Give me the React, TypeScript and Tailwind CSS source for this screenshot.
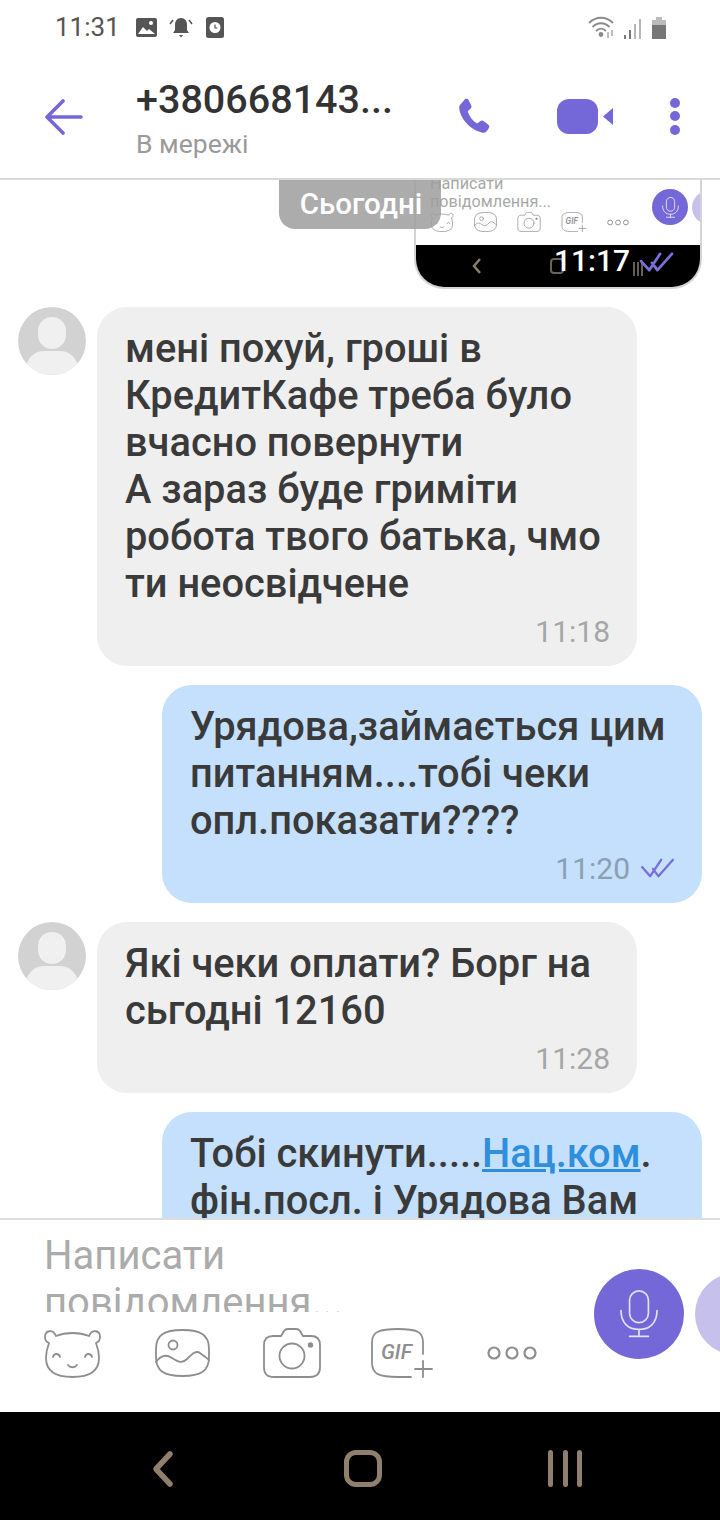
const roboto = "font-['Roboto',sans-serif]";

type IconProps = { w: number; h: number; className?: string };

function Bear({ w, h, className }: IconProps) {
    return (
        <svg width={w} height={h} viewBox="0 0 57 50" fill="none" stroke="#8e8e8e" strokeWidth="1.8" strokeLinecap="round" className={className}>
            <path d="M12 8C9 1 1 2 1 9c0 3 1.500 5 4 6-1.500 4-3 9-3 15 0 13 9 19 26.500 19S55 43 55 30c0-6-1.500-11-3-15 2.500-1 4-3 4-6 0-7-8-8-11-1-5-2-11-3-16.500-3S17 6 12 8z" />
            <path d="M9 29c1-4 6-4 7 0M41 29c1-4 6-4 7 0M24 37c2 3 7 3 9 0" />
        </svg>
    );
}

function Gallery({ w, h, className }: IconProps) {
    return (
        <svg width={w} height={h} viewBox="0 0 55 48" fill="none" stroke="#8e8e8e" strokeWidth="1.8" strokeLinecap="round" className={className}>
            <path d="M1 20C1 6 9 1 27.500 1S54 6 54 20v8c0 14-8 19-26.500 19S1 42 1 28z" />
            <circle cx="18" cy="16" r="4.500" />
            <path d="M1 33c5-7 10-8 16-4s10 6 15 1 9-9 13-6 7 5 9 7" />
        </svg>
    );
}

function Camera({ w, h, className }: IconProps) {
    return (
        <svg width={w} height={h} viewBox="0 0 58 50" fill="none" stroke="#8e8e8e" strokeWidth="1.8" strokeLinecap="round" className={className}>
            <path d="M1 17c0-6 3-9 9-9h8l3-5c1-1.500 2-2 4-2h8c2 0 3 .5 4 2l3 5h8c6 0 9 3 9 9v22c0 7-3 10-10 10H11C4 49 1 46 1 39z" />
            <circle cx="29" cy="28" r="12.500" />
            <circle cx="47.500" cy="17" r="1.800" fill="#8e8e8e" />
        </svg>
    );
}

function GifPlus({ w, h, className }: IconProps) {
    return (
        <svg width={w} height={h} viewBox="0 0 62 50" fill="none" stroke="#8e8e8e" strokeWidth="1.8" strokeLinecap="round" className={className}>
            <path d="M52 26V14C52 4 46 1 27 1S1 4 1 14v21c0 11 7 14 26 14h13" />
            <path d="M52 33v16M44 41h17" />
            <text x="10" y="31" fill="#8e8e8e" stroke="none" fontFamily="Roboto, sans-serif" fontWeight="500" fontStyle="italic" fontSize="21">GIF</text>
        </svg>
    );
}

function Dots({ w, h, className }: IconProps) {
    return (
        <svg width={w} height={h} viewBox="0 0 50 16" fill="none" stroke="#8e8e8e" strokeWidth="2.200" className={className}>
            <circle cx="7" cy="8" r="5.500" />
            <circle cx="25" cy="8" r="5.500" />
            <circle cx="43" cy="8" r="5.500" />
        </svg>
    );
}

function Mic({ size, strokeWidth = 2 }: { size: number; strokeWidth?: number }) {
    return (
        <svg width={size} height={size} viewBox="0 0 48 56" fill="none" stroke="#e4e0f8" strokeWidth={strokeWidth} strokeLinecap="round">
            <rect x="13" y="1" width="22" height="37" rx="11" />
            <path d="M3 24c0 15 9 22 21 22s21-7 21-22M24 46v8M13 54h22" />
        </svg>
    );
}

function Checks({ w, h, stroke }: { w: number; h: number; stroke: number }) {
    return (
        <svg width={w} height={h} viewBox="0 0 36 22" fill="none" stroke="#7a6fd8" strokeWidth={stroke} strokeLinecap="round" strokeLinejoin="round">
            <path d="M1 10l9 10L22 2M13 12l6 8L35 2" />
        </svg>
    );
}

function Message({ lines, time, out, checks }: { lines: React.ReactNode[]; time: string; out?: boolean; checks?: boolean }) {
    return (
        <div className={`w-[540px] rounded-[30px] pl-[28px] pr-[27px] pt-[18px] pb-[17px] ${out ? "bg-[#c4e0fc]" : "bg-[#efefef]"}`}>
            <div className="text-[39.800px] leading-[47px] font-medium text-[#3a3a3a] whitespace-nowrap">
                {lines.map((l, i) => <div key={i}>{l}</div>)}
            </div>
            <div className={`mt-[6px] flex h-[36px] items-center justify-end gap-[10px] text-[30px] ${out ? "text-[#8b9fb4]" : "text-[#a6a6a6]"}`}>
                <span>{time}</span>
                {checks && <Checks w={35} h={20} stroke={2.500} />}
            </div>
        </div>
    );
}

function Incoming({ lines, time }: { lines: string[]; time: string }) {
    return (
        <div className="flex items-start pl-[18px]">
            <div className="relative h-[68px] w-[68px] shrink-0 overflow-hidden rounded-full bg-[#d2d2d2]">
                <div className="mx-auto mt-[10px] h-[32px] w-[28px] rounded-full bg-[#f0f0f0]" />
                <div className="mx-auto mt-[2px] h-[36px] w-[52px] rounded-full bg-[#f0f0f0]" />
            </div>
            <div className="ml-[11px]">
                <Message lines={lines} time={time} />
            </div>
        </div>
    );
}

export default function App() {
    return (
        <div className={`flex h-[1520px] w-[720px] flex-col overflow-hidden bg-white ${roboto}`}>
            {/* status bar */}
            <div className="flex h-[54px] shrink-0 items-center pl-[55px] pr-[54px] text-[#555555]">
                <span className="text-[26px] leading-none">11:31</span>
                <svg width="21" height="19" viewBox="0 0 21 19" className="ml-[16px]">
                    <rect width="21" height="19" rx="2" fill="#555555" />
                    <circle cx="15" cy="5" r="2" fill="#fff" />
                    <path d="M2 16l5-7 4 4 2-2 6 5z" fill="#fff" />
                </svg>
                <svg width="24" height="21" viewBox="0 0 24 21" className="ml-[12px]">
                    <path d="M12 1c-4 0-6 3-6 7v5l-2 3h16l-2-3V8c0-4-2-7-6-7zM10 18h4l-2 2.500z" fill="#555555" />
                    <path d="M4 3L1 7M20 3l3 4" stroke="#555555" strokeWidth="1.500" fill="none" />
                </svg>
                <svg width="18" height="21" viewBox="0 0 18 21" className="ml-[13px]">
                    <rect width="18" height="21" rx="2.500" fill="#555555" />
                    <circle cx="9" cy="10.500" r="5.500" fill="#fff" />
                    <path d="M9 7.500v3.500h2.500" stroke="#555555" strokeWidth="1.200" fill="none" />
                </svg>
                <div className="ml-auto flex items-end gap-[8px]">
                    <svg width="27" height="23" viewBox="0 0 27 23" fill="none" stroke="#8a8a8a" strokeWidth="1.800">
                        <path d="M1 7c7-7 17-7 24 0M4.500 11c5-5 12-5 17 0M8 15c3-3 7-3 10 0" />
                        <circle cx="13" cy="18.500" r="1.500" fill="#8a8a8a" />
                        <path d="M20 16v6M24 14v6" stroke="#aaaaaa" strokeWidth="1.500" />
                    </svg>
                    <svg width="19" height="21" viewBox="0 0 19 21" stroke="#b5b5b5" strokeWidth="2">
                        <path d="M2 21v-4" stroke="#777777" />
                        <path d="M7 21v-9" stroke="#777777" />
                        <path d="M12 21V6M17 21V1" />
                    </svg>
                    <svg width="14" height="22" viewBox="0 0 14 22" className="ml-[2px]">
                        <rect x="4" width="6" height="3" fill="#bbbbbb" />
                        <rect y="3" width="14" height="5" fill="#bbbbbb" />
                        <rect y="8" width="14" height="14" fill="#777777" />
                    </svg>
                </div>
            </div>

            {/* header */}
            <div className="flex h-[126px] shrink-0 items-center border-b-2 border-[#d9d9d9] pl-[45px] pr-[40px]">
                <svg width="38" height="36" viewBox="0 0 38 36" fill="none" stroke="#7468d8" strokeWidth="3.600" strokeLinecap="round" strokeLinejoin="round" className="mt-[1px]">
                    <path d="M36 18H3M18 2L2 18l16 16" />
                </svg>
                <div className="ml-[53px] mt-[4px] flex w-[320px] flex-col">
                    <span className="text-[39.500px] leading-[46px] font-medium text-[#333333]">+380668143...</span>
                    <span className="mt-[5px] text-[26.500px] leading-[32px] text-[#9a9a9a]">В мережі</span>
                </div>
                <svg width="36" height="36" viewBox="0 0 24 24" fill="#7468d8" className="ml-[-1px] shrink-0">
                    <path d="M6.600 .8c.9-.5 2-.2 2.500.7l1.700 3.300c.4.8.2 1.800-.5 2.300L9 8.300c-.4.3-.5.8-.3 1.300 1.100 2.900 3 5.300 5.500 7 .4.3.9.2 1.300-.1l1.300-1c.7-.6 1.700-.6 2.400 0l2.900 2.200c.8.6 1 1.700.4 2.500l-1.100 1.600c-.7 1-1.900 1.500-3.100 1.300C10.500 21.500 3.500 14 2.800 6.700c-.1-1.200.4-2.300 1.400-3z" />
                </svg>
                <div className="ml-[66px] flex shrink-0 items-center">
                    <div className="h-[35px] w-[41px] rounded-[12px] bg-[#7468d8]" />
                    <svg width="10" height="17" viewBox="0 0 10 17" fill="#7468d8" className="ml-[5px]">
                        <path d="M10 0v17L0 8.500z" />
                    </svg>
                </div>
                <div className="ml-auto flex flex-col gap-[3.500px]">
                    <div className="h-[10px] w-[10px] rounded-full bg-[#7468d8]" />
                    <div className="h-[10px] w-[10px] rounded-full bg-[#7468d8]" />
                    <div className="h-[10px] w-[10px] rounded-full bg-[#7468d8]" />
                </div>
            </div>

            {/* messages */}
            <div className="relative flex min-h-0 flex-1 flex-col gap-[19px] overflow-hidden">
                <div className="relative mb-[-1px] ml-[414px] h-[109px] w-[288px] shrink-0 overflow-hidden rounded-b-[30px] border-x-2 border-b-2 border-[#d4d4d4]">
                    <div className="flex h-[65px] overflow-hidden">
                        <div className="ml-[14px] w-[222px] shrink-0">
                            <div className="h-[32px] overflow-hidden text-[16.200px] leading-[18px] text-[#a8a8a8]">
                                <div className="mt-[-5px]">Написати</div>
                                <div>повідомлення...</div>
                            </div>
                            <div className="flex items-center">
                                <Bear w={24} h={20} />
                                <Gallery w={23} h={20} className="ml-[20px]" />
                                <Camera w={24} h={20} className="ml-[20px]" />
                                <GifPlus w={26} h={20} className="ml-[20px]" />
                                <Dots w={22} h={7} className="ml-[20px]" />
                            </div>
                        </div>
                        <div className="mt-[9px] flex h-[36px] w-[36px] shrink-0 items-center justify-center rounded-full bg-[#7468d8]">
                            <Mic size={21} strokeWidth={2.500} />
                        </div>
                        <div className="ml-[4px] mt-[11px] h-[33px] w-[33px] shrink-0 rounded-full bg-[#c6c0ec]" />
                    </div>
                    <div className="flex h-[42px] items-center bg-black">
                        <svg width="10" height="16" viewBox="0 0 10 16" fill="none" stroke="#8a7d6c" strokeWidth="2.500" className="ml-[56px] shrink-0">
                            <path d="M8 1L2 8l6 7" />
                        </svg>
                        <div className="ml-[68px] h-[16px] w-[14px] shrink-0 rounded-[4px] border-2 border-[#6b6258]" />
                        <span className="mb-[10px] ml-[-10px] text-[30px] leading-none font-medium text-white">11:17</span>
                        <svg width="14" height="14" viewBox="0 0 14 14" stroke="#8a7d6c" strokeWidth="1.500" className="ml-[2px] mt-[6px] shrink-0">
                            <path d="M2 0v14M6 0v14M10 0v14" />
                        </svg>
                        <div className="mb-[8px] ml-[-7px] shrink-0">
                            <Checks w={35} h={20} stroke={3} />
                        </div>
                    </div>
                </div>

                <div className="absolute left-[279px] top-0 flex h-[49px] w-[162px] items-center justify-center rounded-b-[16px] bg-[#9e9e9e]/85 pl-[2px] text-[29.500px] font-medium text-white">
                    Сьогодні
                </div>

                <Incoming
                    lines={["мені похуй, гроші в", "КредитКафе треба було", "вчасно повернути", "А зараз буде гриміти", "робота твого батька, чмо", "ти неосвідчене"]}
                    time="11:18"
                />

                <div className="ml-[162px] shrink-0">
                    <Message
                        out
                        checks
                        lines={["Урядова,займається цим", "питанням....тобі чеки", "опл.показати????"]}
                        time="11:20"
                    />
                </div>

                <Incoming lines={["Які чеки оплати? Борг на", "сьгодні 12160"]} time="11:28" />

                <div className="ml-[162px] shrink-0">
                    <Message
                        out
                        checks
                        lines={[
                            <>Тобі скинути.....<span className="text-[#2f8fdc] underline">Нац.ком</span>.</>,
                            "фін.посл. і Урядова Вам",
                        ]}
                        time="11:32"
                    />
                </div>
            </div>

            {/* composer */}
            <div className="flex h-[194px] shrink-0 overflow-hidden border-t-2 border-[#dcdcdc] pl-[44px]">
                <div className="w-[550px] shrink-0">
                    <div className="h-[92px] overflow-hidden pt-[12px] text-[40px] leading-[47px] text-[#ababab]">
                        <div>Написати</div>
                        <div>повідомлення...</div>
                    </div>
                    <div className="mt-[16px] flex items-center">
                        <Bear w={57} h={50} />
                        <Gallery w={55} h={48} className="ml-[54px]" />
                        <Camera w={58} h={50} className="ml-[53px]" />
                        <GifPlus w={62} h={50} className="ml-[50px]" />
                        <Dots w={50} h={16} className="ml-[54px]" />
                    </div>
                </div>
                <div className="mt-[49px] flex h-[90px] w-[90px] shrink-0 items-center justify-center rounded-full bg-[#7468d8]">
                    <Mic size={48} />
                </div>
                <div className="ml-[11px] mt-[53px] h-[82px] w-[82px] shrink-0 rounded-full bg-[#c6c0ec]" />
            </div>

            {/* nav bar */}
            <div className="flex h-[108px] shrink-0 items-center bg-black pt-[5px]">
                <svg width="24" height="38" viewBox="0 0 24 38" fill="none" stroke="#8f7f6c" strokeWidth="5.500" strokeLinecap="round" strokeLinejoin="round" className="ml-[151px]">
                    <path d="M19 4L5 19l14 15" />
                </svg>
                <div className="ml-[169px] h-[37px] w-[38px] rounded-[12px] border-[5px] border-[#8f7f6c]" />
                <div className="ml-[166px] flex gap-[9.500px]">
                    <div className="h-[37px] w-[5px] rounded-full bg-[#8f7f6c]" />
                    <div className="h-[37px] w-[5px] rounded-full bg-[#8f7f6c]" />
                    <div className="h-[37px] w-[5px] rounded-full bg-[#8f7f6c]" />
                </div>
            </div>
        </div>
    );
}
